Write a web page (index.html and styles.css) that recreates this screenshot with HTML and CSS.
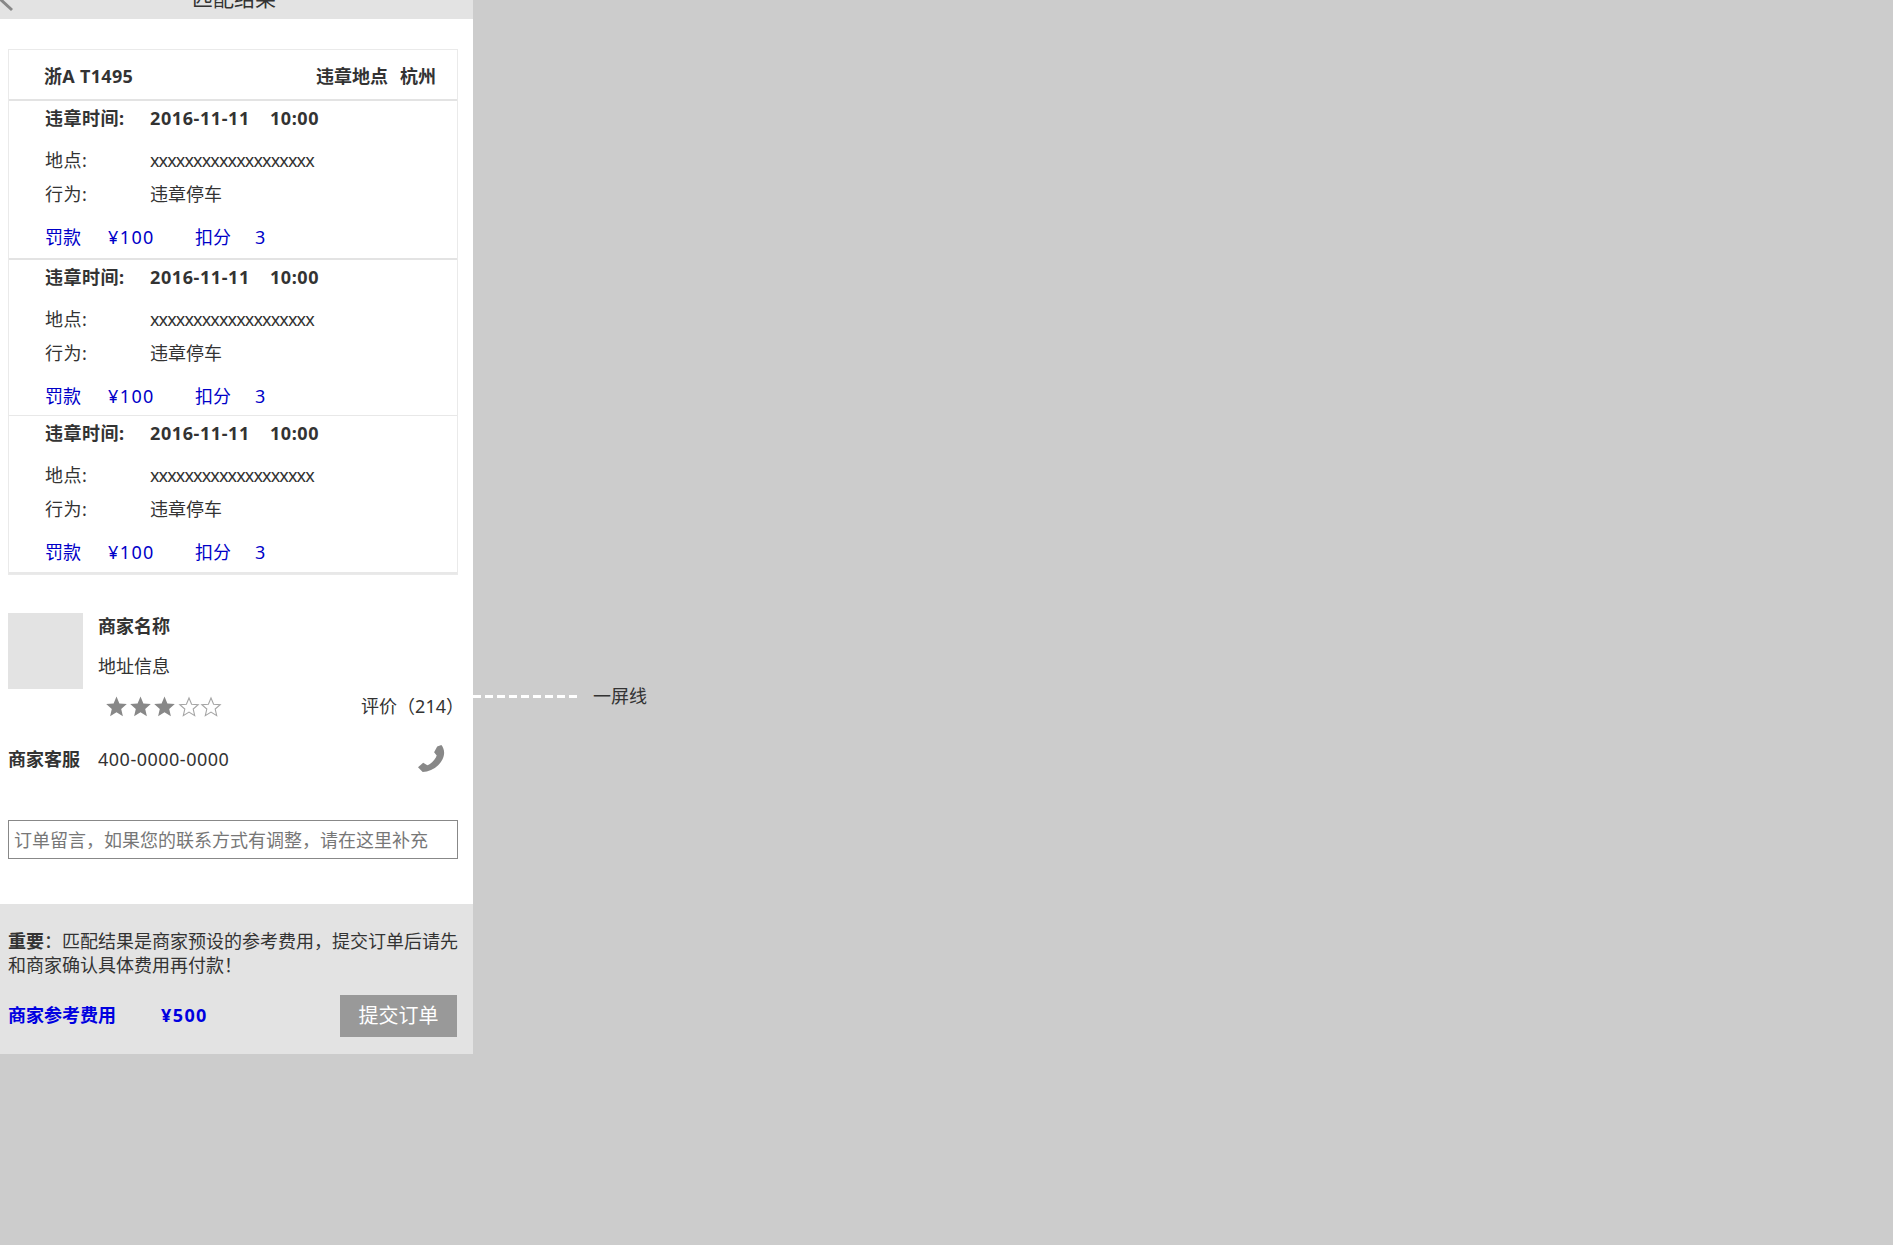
FILE: index.html
```html
<!DOCTYPE html>
<html lang="zh-CN">
<head>
<meta charset="utf-8">
<title>匹配结果</title>
<link rel="stylesheet" href="styles.css">
</head>
<body>
<div class="panel">
  <header class="topbar">
    <svg class="back" width="14" height="12" viewBox="0 0 14 12"><path d="M0 -1 L12 10" fill="none" stroke="#888" stroke-width="3"/></svg>
    <div class="title">匹配结果</div>
  </header>
  <main class="content">
    <section class="table">
      <div class="table-head">
        <span class="plate">浙A T1495</span>
        <span class="place-head"><span>违章地点</span><span>杭州</span></span>
      </div>
      <div class="record">
        <div class="line time"><span class="label">违章时间:</span><span class="num">2016-11-11</span><span class="clock num">10:00</span></div>
        <div class="line place"><span class="label">地点:</span><span class="xs">xxxxxxxxxxxxxxxxxxx</span></div>
        <div class="line"><span class="label">行为:</span><span>违章停车</span></div>
        <div class="line fine"><span class="f1">罚款</span><span class="f2 money">¥100</span><span class="f3">扣分</span><span>3</span></div>
      </div>
      <div class="record">
        <div class="line time"><span class="label">违章时间:</span><span class="num">2016-11-11</span><span class="clock num">10:00</span></div>
        <div class="line place"><span class="label">地点:</span><span class="xs">xxxxxxxxxxxxxxxxxxx</span></div>
        <div class="line"><span class="label">行为:</span><span>违章停车</span></div>
        <div class="line fine"><span class="f1">罚款</span><span class="f2 money">¥100</span><span class="f3">扣分</span><span>3</span></div>
      </div>
      <div class="record">
        <div class="line time"><span class="label">违章时间:</span><span class="num">2016-11-11</span><span class="clock num">10:00</span></div>
        <div class="line place"><span class="label">地点:</span><span class="xs">xxxxxxxxxxxxxxxxxxx</span></div>
        <div class="line"><span class="label">行为:</span><span>违章停车</span></div>
        <div class="line fine"><span class="f1">罚款</span><span class="f2 money">¥100</span><span class="f3">扣分</span><span>3</span></div>
      </div>
    </section>

    <section class="merchant">
      <div class="thumb"></div>
      <div class="merchant-info">
        <div class="merchant-name">商家名称</div>
        <div class="merchant-addr">地址信息</div>
      </div>
    </section>
    <div class="rating">
      <svg class="stars" width="116" height="22" viewBox="0 0 116 22">
        <defs>
          <path id="star" d="M10.5 0.5 L13.4 7.4 L20.8 8 L15.2 12.9 L16.9 20.2 L10.5 16.3 L4.1 20.2 L5.8 12.9 L0.2 8 L7.6 7.4 Z"/>
          <path id="star-o" d="M10 1 L12.6 7.2 L19.2 7.7 L14.2 12 L15.7 18.6 L10 15.1 L4.3 18.6 L5.8 12 L0.8 7.7 L7.4 7.2 Z"/>
        </defs>
        <use href="#star" fill="#888"/>
        <use href="#star" x="24" fill="#888"/>
        <use href="#star" x="48" fill="#888"/>
        <use href="#star-o" x="73" y="1" fill="#fff" stroke="#a5a5a5" stroke-width="1.1"/>
        <use href="#star-o" x="95" y="1" fill="#fff" stroke="#a5a5a5" stroke-width="1.1"/>
      </svg>
      <span class="reviews">评价（214）</span>
    </div>
    <div class="service">
      <span class="service-label">商家客服</span>
      <span class="service-phone">400-0000-0000</span>
      <svg class="phone" width="27" height="27" viewBox="0 0 26 26"><path fill="#888" d="M18.5 1.5 L22.5 0 C25 3 26.5 8 23.5 14 C20.5 20 15 24 8.5 25.5 L4.5 26 L0 21.5 L5 17 L9 19.5 C13 18 17 13.5 18 10 L15.5 7 Z"/></svg>
    </div>
    <input class="message" type="text" placeholder="订单留言，如果您的联系方式有调整，请在这里补充">
  </main>
  <footer class="footer">
    <p class="notice"><b>重要</b>：匹配结果是商家预设的参考费用，提交订单后请先和商家确认具体费用再付款！</p>
    <div class="total">
      <b class="total-label">商家参考费用</b>
      <b class="total-value money">¥500</b>
      <button class="submit" type="button">提交订单</button>
    </div>
  </footer>
  <div class="fold"><span class="fold-line"></span><span>一屏线</span></div>
</div>
</body>
</html>
```

FILE: styles.css
```css
* { box-sizing: border-box; }
html, body { margin: 0; padding: 0; }
body {
  min-height: 1245px;
  background: #ccc;
  color: #333;
  font: 18px/1.3 "Noto Sans", "Noto Sans CJK SC", sans-serif;
}
.panel {
  position: relative;
  width: 473px;
  background: #fff;
}
.topbar {
  position: relative;
  height: 19px;
  padding-right: 5px;
  background: #e3e3e3;
  overflow: hidden;
  text-align: center;
}
.back { position: absolute; left: 0; top: 0; }
.title {
  margin-top: -17px;
  font-size: 21px;
  line-height: 30px;
}
.content { padding: 30px 15px 0 8px; }

.table { border: 1px solid #eaeaea; }
.table-head {
  display: flex;
  justify-content: space-between;
  align-items: center;
  height: 51px;
  padding: 5px 21px 0 35px;
  font-weight: 700;
  border-bottom: 2px solid #e3e3e3;
}
.plate { letter-spacing: 0.3px; }
.place-head { display: flex; gap: 12px; }
.record {
  height: 159px;
  padding-left: 36px;
  border-bottom: 2px solid #e3e3e3;
}
.record:nth-child(3) { height: 156px; border-bottom-width: 1px; border-bottom-color: #e8e8e8; }
.record:nth-child(4) { height: 158px; border-bottom-color: #e8e8e8; }
.line { display: flex; line-height: 34px; height: 34px; }
.label { width: 105px; flex: none; letter-spacing: 0.5px; }
.time { font-weight: 700; height: 36px; line-height: 34px; }
.num { letter-spacing: 0.6px; }
.clock { margin-left: 20px; }
.place { margin-top: 6px; }
.xs { letter-spacing: -0.9px; }
.fine { margin-top: 9px; color: #0000c8; }
.money { letter-spacing: 1.4px; }
.f1 { width: 63px; }
.f2 { width: 87px; }
.f3 { width: 60px; }

.merchant { display: flex; gap: 15px; margin-top: 38px; }
.thumb { width: 75px; height: 76px; background: #e3e3e3; }
.merchant-name { font-weight: 700; line-height: 26px; }
.merchant-addr { margin-top: 13px; line-height: 28px; }
.rating {
  display: flex;
  justify-content: space-between;
  align-items: center;
  height: 36px;
  padding: 0 0 0 98px;
}
.stars { display: block; }
.reviews { margin-right: -6px; }
.service {
  display: flex;
  align-items: center;
  height: 36px;
  margin-top: 17px;
}
.service-label { width: 90px; font-weight: 700; }
.service-phone { flex: 1; letter-spacing: 0.5px; }
.phone { margin-right: 13px; margin-top: -4px; }
.message {
  display: block;
  width: 100%;
  height: 39px;
  margin-top: 42px;
  padding: 0 5px;
  border: 1px solid #888;
  border-radius: 0;
  background: #fff;
  color: #333;
  font: inherit;
  outline: none;
}
.message::placeholder { color: #777; opacity: 1; }

.footer {
  margin-top: 45px;
  height: 150px;
  padding: 25px 16px 0 8px;
  background: #e3e3e3;
}
.notice { margin: 0 -10px 0 0; line-height: 24px; }
.total { display: flex; align-items: center; margin-top: 18px; color: #0000e0; }
.total-label { width: 153px; }
.total-value { flex: 1; }
.submit {
  width: 117px;
  height: 42px;
  padding: 0;
  border: 0;
  background: #999;
  color: #fff;
  font: inherit;
  font-size: 20px;
}
.fold {
  position: absolute;
  left: 473px;
  top: 684px;
  display: flex;
  align-items: center;
  gap: 15px;
  height: 26px;
  white-space: nowrap;
}
.fold-line {
  width: 105px;
  height: 3px;
  margin-bottom: 2px;
  background: repeating-linear-gradient(90deg, #fff 0 8px, transparent 8px 12px);
}
```
